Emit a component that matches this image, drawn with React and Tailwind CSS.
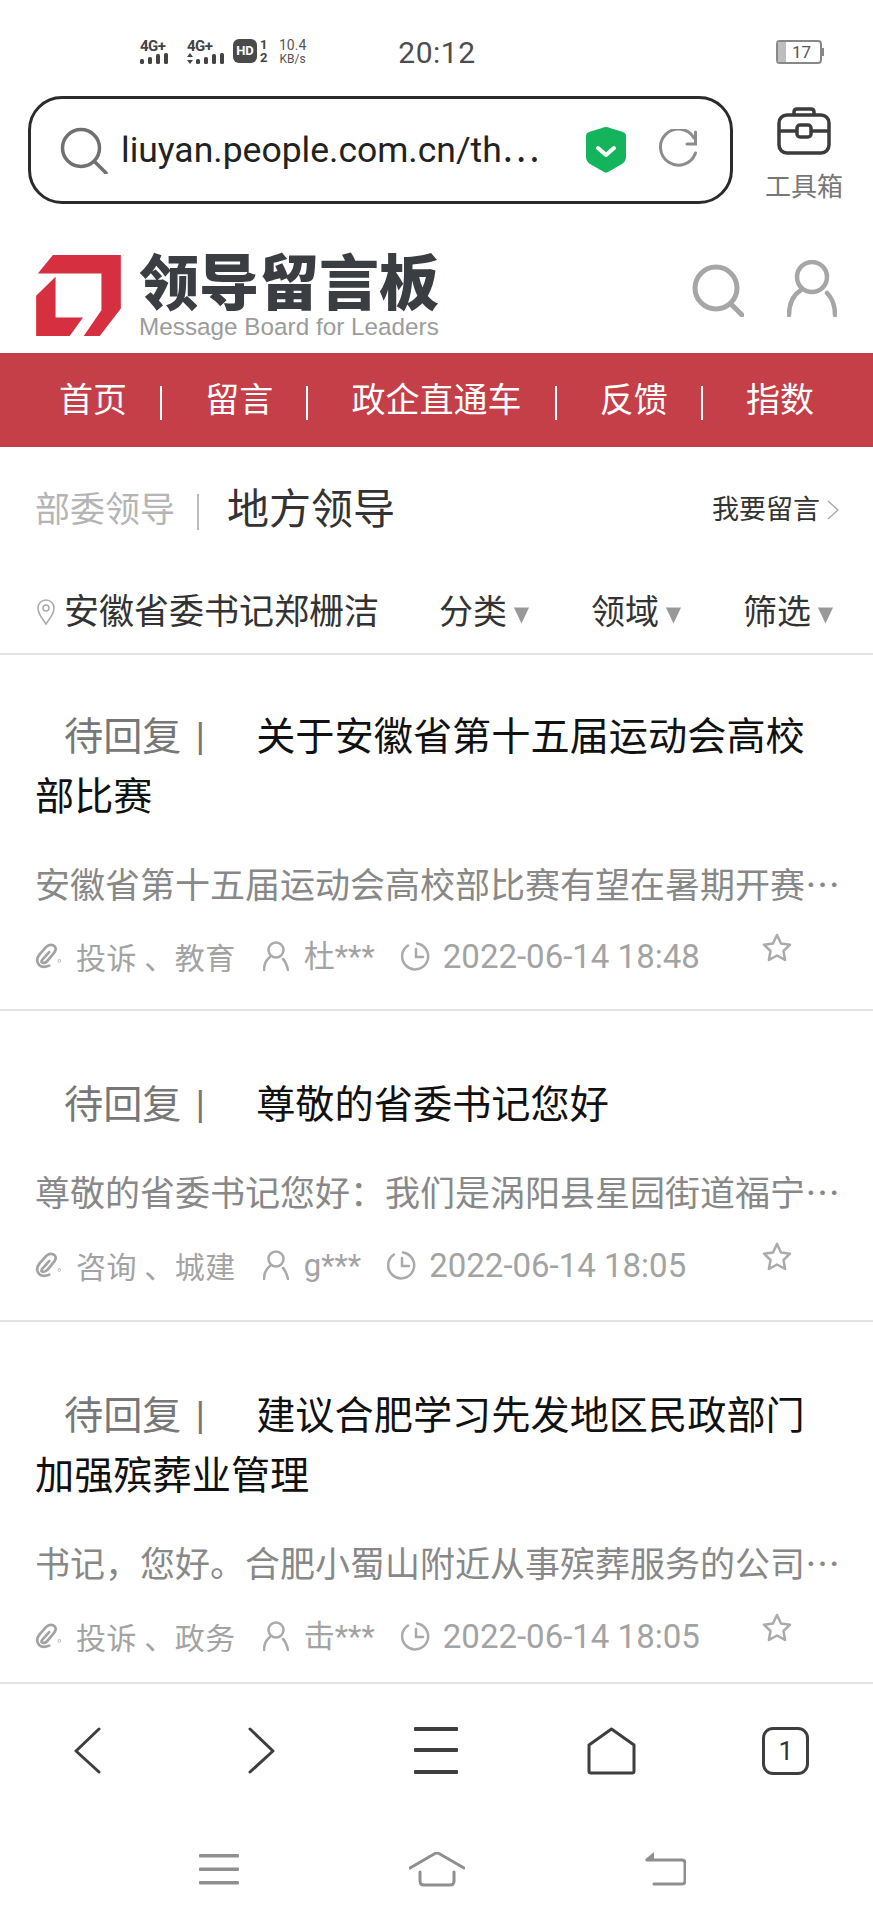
const items = [
  {
    title: "关于安徽省第十五届运动会高校部比赛",
    desc: "安徽省第十五届运动会高校部比赛有望在暑期开赛…",
    tags: "投诉 、教育",
    user: "杜***",
    date: "2022-06-14 18:48",
  },
  {
    title: "尊敬的省委书记您好",
    desc: "尊敬的省委书记您好：我们是涡阳县星园街道福宁…",
    tags: "咨询 、城建",
    user: "g***",
    date: "2022-06-14 18:05",
  },
  {
    title: "建议合肥学习先发地区民政部门加强殡葬业管理",
    desc: "书记，您好。合肥小蜀山附近从事殡葬服务的公司…",
    tags: "投诉 、政务",
    user: "击***",
    date: "2022-06-14 18:05",
  },
];

const navLinks = ["首页", "留言", "政企直通车", "反馈", "指数"];

const Signal = ({ arrows }) => (
  <div className="flex flex-col items-end">
    <span className="self-start text-[15px] leading-[13px] font-bold tracking-[-0.5px] text-[#444]">4G+</span>
    <svg width={arrows ? 37 : 28} height="11" viewBox={arrows ? "0 0 37 11" : "0 0 28 11"} fill="#444">
      {arrows && <path d="M3 0l3 4H0zM3 11l3-4H0z" />}
      <g transform={arrows ? "translate(9 0)" : ""}>
        <rect x="0" y="6" width="4" height="5" rx="1.5" />
        <rect x="8" y="4" width="4" height="7" rx="1.5" />
        <rect x="16" y="1" width="4" height="10" rx="1.5" />
        <rect x="24" y="0" width="4" height="11" rx="1.5" />
      </g>
    </svg>
  </div>
);

const StatusBar = () => (
  <div className="h-[96px] flex items-start pt-[40px] pl-[140px] text-[#555]">
    <Signal />
    <div className="ml-[19px]">
      <Signal arrows />
    </div>
    <div className="ml-[9px] w-[24px] h-[24px] -mt-px rounded-[6px] bg-[#4a4a4a] text-white text-[13px] leading-[24px] font-bold text-center">
      HD
    </div>
    <div className="ml-[3px] w-[10px] -mt-[2px] flex flex-col text-[13px] leading-[13px] font-bold text-[#444]">
      <span>1</span>
      <span>2</span>
    </div>
    <div className="ml-[9px] -mt-[2px] flex flex-col items-center text-[#555]">
      <span className="text-[14px] leading-[14px]">10.4</span>
      <span className="text-[12px] leading-[14px]">KB/s</span>
    </div>
    <div className="ml-[92px] -mt-[6px] text-[30px] leading-[38px] tracking-[0.5px] text-[#4d4d4d]">20:12</div>
    <div className="ml-auto mr-[49px] flex items-center">
      <div className="w-[46px] h-[24px] rounded-[4px] border-2 border-[#888] flex items-center text-[17px] text-[#555] overflow-hidden">
        <div className="w-[8px] h-full bg-[#bdbdbd]" />
        <span className="ml-[6px] leading-none">17</span>
      </div>
      <div className="w-[2px] h-[8px] bg-[#888]" />
    </div>
  </div>
);

const UrlRow = () => (
  <div className="flex pl-[28px]">
    <div className="w-[705px] h-[108px] rounded-[34px] border-[3px] border-[#2b2b2b] flex items-center pl-[29px]">
      <svg width="48" height="47" viewBox="0 0 48 47" fill="none" stroke="#707070" strokeWidth="3.5" strokeLinecap="round">
        <circle cx="21" cy="21" r="18.5" />
        <path d="M35 35l11 11" />
      </svg>
      <span className="ml-[13px] mt-[2px] w-[432px] text-[35.5px] leading-none text-[#222] whitespace-nowrap">liuyan.people.com.cn/th⋯</span>
      <svg className="ml-[33px]" width="40" height="46" viewBox="0 0 40 46">
        <path d="M20 0q2 0 4 1l13 4q3 1 3 4v21q0 4-4 7l-14 8q-2 1-4 0L4 37q-4-3-4-7V9q0-3 3-4l13-4q2-1 4-1z" fill="#14b45c" />
        <path d="M12 21l8 7 8-7" fill="none" stroke="#fff" strokeWidth="4" strokeLinecap="round" strokeLinejoin="round" />
      </svg>
      <svg className="ml-[32px]" width="42" height="42" viewBox="0 0 42 42" fill="none" stroke="#8c8c8c" strokeWidth="3" strokeLinecap="round">
        <path d="M37.500 24A18 18 0 1 1 36 9" />
        <path d="M37.500 3v12H29" />
      </svg>
    </div>
    <div className="flex-1 flex flex-col items-center pt-[11px] pl-[2px]">
      <svg width="54" height="48" viewBox="0 0 54 48" fill="none" stroke="#3c3c3c" strokeWidth="3.5" strokeLinejoin="round">
        <path d="M17 8V5q0-3 3-3h14q3 0 3 3v3" />
        <rect x="2" y="8" width="50" height="38" rx="8" />
        <path d="M2 24h18M34 24h18" />
        <rect x="20" y="18" width="14" height="12" rx="3" />
      </svg>
      <span className="mt-[17px] text-[26px] leading-[30px] text-[#777]">工具箱</span>
    </div>
  </div>
);

const LogoRow = () => (
  <div className="h-[149px] pt-[49px] pl-[36px] pr-[36px] flex items-start">
    <svg className="mt-[2px]" width="85" height="81" viewBox="50 45 253 242" fill="#d62f3f">
      <path d="M100 45H303V205L240 287H192L245 210V100H55z" />
      <path d="M50 167L108 110V232H190L150 287H50z" />
    </svg>
    <div className="ml-[18px] flex flex-col w-[300px]">
      <span className="mt-[2px] text-[60px] leading-[60px] font-black text-[#3a3d42] whitespace-nowrap">领导留言板</span>
      <span className="font-['Liberation_Sans',sans-serif] text-[24.300px] leading-[24px] text-[#9c9c9c] whitespace-nowrap">
        Message Board for Leaders
      </span>
    </div>
    <svg className="ml-auto mt-[11px]" width="52" height="53" viewBox="0 0 52 53" fill="none" stroke="#a6a6a6" strokeWidth="5" strokeLinecap="round">
      <circle cx="24" cy="24" r="21" />
      <path d="M39 40l11 11" />
    </svg>
    <svg className="ml-[43px] mt-[7px]" width="50" height="57" viewBox="0 0 50 57" fill="none" stroke="#a6a6a6" strokeWidth="4.500" strokeLinecap="round">
      <ellipse cx="25" cy="17" rx="15" ry="15" />
      <path d="M14 30C6 35 2 44 2 55M40 33c5 5 8 13 8 22" />
    </svg>
  </div>
);

const NavBar = () => (
  <div className="h-[94px] bg-[#c43f48] flex items-center justify-between px-[59px] text-[34px] text-white">
    {navLinks.map((link, i) => (
      <div key={link} className="contents">
        {i > 0 && <div className="w-[2px] h-[34px] mt-[6px] bg-white -translate-x-[5px]" />}
        <span className="leading-none">{link}</span>
      </div>
    ))}
  </div>
);

const Tabs = () => (
  <div className="h-[124px] pt-[2px] flex items-center pl-[35px] pr-[34px]">
    <span className="text-[35px] leading-none text-[#b5b5b5]">部委领导</span>
    <div className="ml-[22px] w-[2px] h-[36px] mt-[4px] bg-[#bbb]" />
    <span className="ml-[28px] text-[42px] leading-none text-[#333]">地方领导</span>
    <span className="ml-auto text-[27px] leading-none text-[#333]">我要留言</span>
    <svg className="ml-[7px]" width="12" height="20" viewBox="0 0 12 20" fill="none" stroke="#aaa" strokeWidth="1.500">
      <path d="M1 1l10 9-10 9" />
    </svg>
  </div>
);

const FilterButton = ({ label }) => (
  <div className="flex items-center">
    <span className="text-[34px] leading-none text-[#333]">{label}</span>
    <svg className="mt-[6px] ml-[6px]" width="17" height="18" viewBox="0 0 18 18" fill="#999">
      <path d="M1 1h16l-8 17z" />
    </svg>
  </div>
);

const Filters = () => (
  <div className="h-[84px] flex items-center pl-[37px] pr-[39px] border-b-2 border-[#e2e2e2]">
    <svg width="18" height="26" viewBox="0 0 18 26" fill="none" stroke="#aaa" strokeWidth="1.500">
      <path d="M9 25C4 18 1 14 1 9a8 8 0 0 1 16 0c0 5-3 9-8 16z" />
      <circle cx="9" cy="9" r="3" />
    </svg>
    <span className="ml-[9px] text-[35px] leading-none text-[#333]">安徽省委书记郑栅洁</span>
    <div className="ml-auto flex gap-[61px]">
      <FilterButton label="分类" />
      <FilterButton label="领域" />
      <FilterButton label="筛选" />
    </div>
  </div>
);

const MetaIcons = {
  clip: (
    <svg width="27" height="27" viewBox="30 25 80 80" fill="none" stroke="#a3a3a3" strokeWidth="8" strokeLinecap="round" strokeLinejoin="round">
      <path d="M72 52L52 74q-7 10 3 10 7 0 15-10l18-22q8-14-4-20-10-4-20 4L44 58q-14 18-2 32 12 10 30 2" />
      <circle cx="102" cy="78" r="1" />
    </svg>
  ),
  user: (
    <svg width="26" height="30" viewBox="0 0 26 30" fill="none" stroke="#aaa" strokeWidth="2.500" strokeLinecap="round">
      <circle cx="13" cy="9" r="7.500" />
      <path d="M7 16C3 19 1 24 1 29M20 18c3 3 4 7 5 11" />
    </svg>
  ),
  clock: (
    <svg width="29" height="29" viewBox="0 0 29 29" fill="none" stroke="#aaa" strokeWidth="2.500" strokeLinecap="round">
      <path d="M16 1.500A13 13 0 1 1 7 3.500" />
      <path d="M15 7v8h7" />
    </svg>
  ),
};

const MessageItem = ({ item, first, last }) => (
  <div className={`${first ? "pt-[52px] pb-[33px]" : "pt-[64px] pb-[35px]"} ${last ? "" : "border-b-2 border-[#e2e2e2]"} pl-[35px]`}>
    <div className="text-[39.200px] leading-[60px] text-[#111] pr-[60px]">
      <span className="text-[#777] ml-[29px]">待回复</span>
      <span className="text-[#777] ml-[14px] mr-[51px]">|</span>
      {item.title}
    </div>
    <div className="mt-[26px] font-['Noto_Sans_CJK_SC',sans-serif] text-[35px] leading-[60px] text-[#888] whitespace-nowrap">{item.desc}</div>
    <div className={`${first ? "mt-[23px]" : "mt-[24px]"} h-[40px] flex items-center text-[30px] leading-none text-[#a3a3a3]`}>
      {MetaIcons.clip}
      <span className="ml-[14px] tracking-[0.5px] font-['Noto_Sans_CJK_SC',sans-serif]">{item.tags}</span>
      <span className="ml-[27px]">{MetaIcons.user}</span>
      <span className="ml-[15px] text-[31px]">{item.user}</span>
      <span className="ml-[26px]">{MetaIcons.clock}</span>
      <span className="ml-[13px] text-[33px]">{item.date}</span>
      <svg className="ml-auto mr-[81px] -mt-[18px]" width="30" height="29" viewBox="0 0 30 29" fill="none" stroke="#aaa" strokeWidth="2.500" strokeLinejoin="round">
        <path d="M15 2l4 8.500 9 1.200-6.500 6.300 1.600 9L15 22.500 6.900 27l1.600-9L2 11.700l9-1.200z" />
      </svg>
    </div>
  </div>
);

const Toolbar = () => (
  <div className="border-t-2 border-[#e2e2e2] pt-[43px] grid grid-cols-5 justify-items-center">
    <svg width="27" height="47" viewBox="0 0 27 47" fill="none" stroke="#3e3e3e" strokeWidth="3" strokeLinecap="round" strokeLinejoin="round">
      <path d="M25 2L2 24l23 21" />
    </svg>
    <svg width="27" height="47" viewBox="0 0 27 47" fill="none" stroke="#3e3e3e" strokeWidth="3" strokeLinecap="round" strokeLinejoin="round">
      <path d="M2 2l23 22L2 45" />
    </svg>
    <svg width="44" height="47" viewBox="0 0 44 47" fill="#3e3e3e">
      <rect x="0" y="0" width="44" height="4" rx="1" />
      <rect x="0" y="21" width="44" height="4" rx="1" />
      <rect x="0" y="43" width="44" height="4" rx="1" />
    </svg>
    <svg width="49" height="48" viewBox="0 0 49 48" fill="none" stroke="#3e3e3e" strokeWidth="3" strokeLinejoin="round">
      <path d="M24.500 2L47 18v26q0 2-2 2H4q-2 0-2-2V18z" />
    </svg>
    <div className="w-[47px] h-[48px] rounded-[11px] border-[3px] border-[#3e3e3e] flex items-center justify-center text-[26px] leading-none text-[#333]">
      1
    </div>
  </div>
);

const SystemNav = () => (
  <div className="mt-[77px] pl-[199px] flex items-start">
    <svg width="40" height="31" viewBox="0 0 40 31" fill="#8f8f8f" className="mt-[2px]">
      <rect x="0" y="0" width="40" height="3.500" rx="1" />
      <rect x="0" y="13.500" width="40" height="3.500" rx="1" />
      <rect x="0" y="27" width="40" height="3.500" rx="1" />
    </svg>
    <svg className="ml-[170px]" width="56" height="35" viewBox="0 0 56 35" fill="none" stroke="#8f8f8f" strokeWidth="3" strokeLinecap="round" strokeLinejoin="round">
      <path d="M1 16L26 1.500q2-1 4 0L55 16" />
      <path d="M11 20v9q0 4 4 4h26q4 0 4-4v-9" />
    </svg>
    <svg className="ml-[180px]" width="41" height="34" viewBox="0 0 41 34" fill="none" stroke="#8f8f8f" strokeWidth="3" strokeLinecap="round" strokeLinejoin="round">
      <path d="M2 8h35q3 0 3 3v18q0 3-3 3H9" />
      <path d="M0 7.500L9 0v8z" fill="#8f8f8f" stroke="none" />
    </svg>
  </div>
);

export default function App() {
  return (
    <div className="w-[873px] h-[1920px] overflow-hidden bg-white flex flex-col font-['Roboto','Noto_Sans_CJK_SC',sans-serif]">
      <StatusBar />
      <UrlRow />
      <LogoRow />
      <NavBar />
      <Tabs />
      <Filters />
      <div className="h-[1027px] overflow-hidden">
        {items.map((item, i) => (
          <MessageItem key={item.title} item={item} first={i === 0} last={i === items.length - 1} />
        ))}
      </div>
      <Toolbar />
      <SystemNav />
    </div>
  );
}
